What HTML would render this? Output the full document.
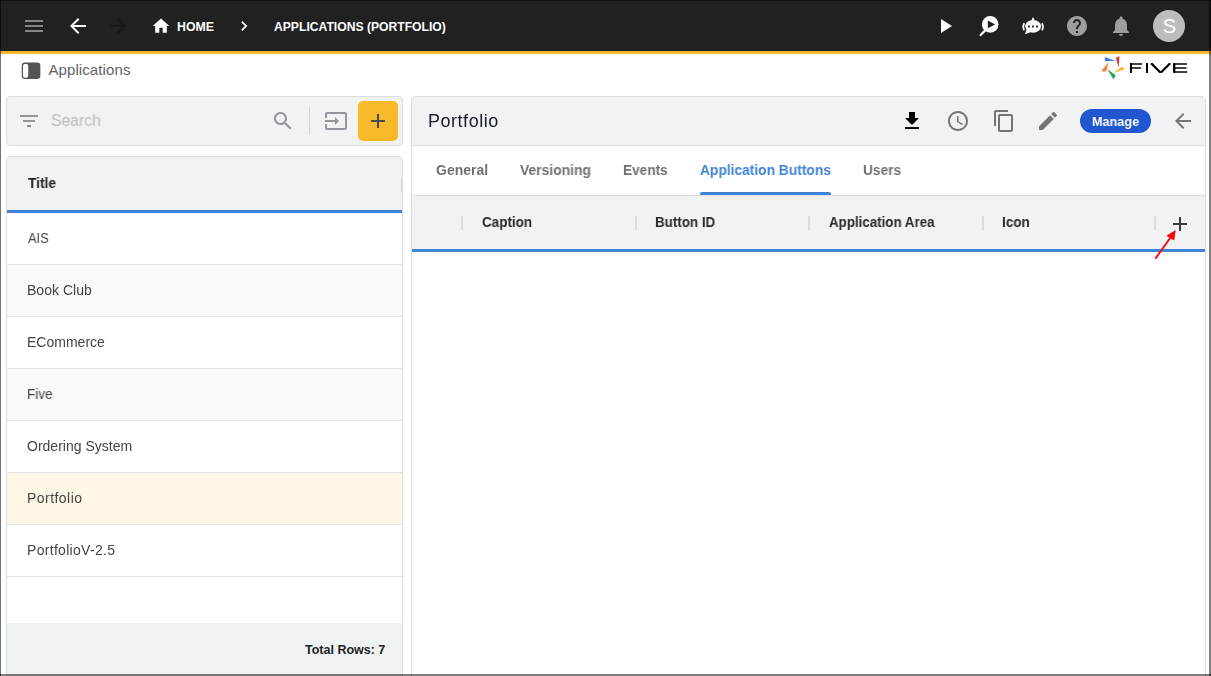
<!DOCTYPE html>
<html lang="en">
<head>
<meta charset="utf-8">
<title>Applications (Portfolio) - Five</title>
<style>

*{box-sizing:border-box;margin:0;padding:0}
ul{list-style:none}
a{text-decoration:none}
html,body{width:1211px;height:676px;overflow:hidden;background:#fff}
body{position:relative;font-family:"Liberation Sans",sans-serif;}
.abs,.ic,.t{position:absolute}
.t{white-space:nowrap;line-height:1;display:block;transform-origin:0 50%}
.g{will-change:transform}
.ic{display:block}
#app{position:absolute;left:0;top:0;width:1211px;height:676px;overflow:hidden;background:#fff}
header{position:absolute;left:0;top:0;width:1211px;height:51px;background:#212121}
#accent{position:absolute;left:0;top:51px;width:1211px;height:3px;background:#f7b52c}
#avatar{position:absolute;left:1153px;top:10px;width:32px;height:32px;border-radius:50%;background:#bdbdbd}
#searchbar{position:absolute;left:6px;top:96px;width:397px;height:50px;background:#f1f2f4;border:1px solid #dcdddf;border-radius:4px}
#addbtn{position:absolute;left:358px;top:101px;width:40px;height:40px;border-radius:5px;background:#f8b92b;border:0}
#vdiv{position:absolute;left:309px;top:107px;width:1px;height:28px;background:#cfd1d4}
#list{position:absolute;left:6px;top:156px;width:397px;height:530px;border:1px solid #dcdddf;border-radius:4px;background:#fff;overflow:hidden}
#list .th{position:absolute;left:0;top:0;width:395px;height:53px;background:#f1f2f4}
#list .bl{position:absolute;left:0;top:53px;width:395px;height:3px;background:#4083d9}
#list .row{position:absolute;left:0;width:395px;height:52px;border-bottom:1px solid #e4e4e5;background:#fff}
#list .row.alt{background:#f8f9fa}
#list .row.sel{background:#fff7e5}
#list .foot{position:absolute;left:0;top:466px;width:395px;height:60px;background:#eff3f3}
#list .hsep{position:absolute;left:394px;top:21px;width:1px;height:14px;background:#d6d7d9}
#main{position:absolute;left:411px;top:96px;width:795px;height:590px;border:1px solid #dcdddf;border-radius:4px;background:#fff;overflow:hidden}
#main .mh{position:absolute;left:0;top:0;width:793px;height:49px;background:#f1f2f4;border-bottom:1px solid #dcdddf}
#main .tabline{position:absolute;left:0;top:98px;width:793px;height:1px;background:#dcdddf}
#main .gh{position:absolute;left:0;top:99px;width:793px;height:53px;background:#f1f2f4}
#main .bl{position:absolute;left:0;top:152px;width:793px;height:3px;background:#4083d9}
#main .ind{position:absolute;left:288px;top:95px;width:131px;height:3px;background:#4083d9;border-radius:2px 2px 0 0}
.csep{position:absolute;top:216px;width:2px;height:14px;background:#dcdcdc}
#manage{position:absolute;left:1080px;top:109px;width:71px;height:24px;border-radius:12px;background:#2056d0}
#t_five{left:1126.3px;top:61.8px;font-family:"DejaVu Sans","Liberation Sans",sans-serif;font-weight:200;font-size:12px;color:#000;letter-spacing:-.9px;transform-origin:0 0;transform:scaleX(2.72);will-change:transform;text-shadow:0 .3px 0 #000,0 .6px 0 #000,0 .9px 0 #000}
#frame-l{position:absolute;left:0;top:0;width:1px;height:676px;background:rgba(0,0,0,.55)}
#frame-t{position:absolute;left:0;top:0;width:1211px;height:1px;background:rgba(0,0,0,.5)}
#frame-r{position:absolute;left:1209px;top:0;width:2px;height:676px;background:rgba(0,0,0,.5)}
#frame-b{position:absolute;left:0;top:674px;width:1211px;height:2px;background:rgba(0,0,0,.5)}

</style>
</head>
<body>
<div id="app">
<header>
<svg class="ic" style="left:22px;top:14px" width="24" height="24" viewBox="0 0 24 24" fill="#858585" ><path d="M3 18h18v-2H3v2zm0-5h18v-2H3v2zm0-7v2h18V6H3z"/></svg>
<svg class="ic" style="left:66px;top:14px" width="24" height="24" viewBox="0 0 24 24" fill="#ffffff" ><path d="M20 11H7.83l5.59-5.59L12 4l-8 8 8 8 1.41-1.41L7.83 13H20v-2z"/></svg>
<svg class="ic" style="left:106px;top:14px" width="24" height="24" viewBox="0 0 24 24" fill="#181818" ><path d="M12 4l-1.41 1.41L16.17 11H4v2h12.17l-5.58 5.59L12 20l8-8z"/></svg>
<nav aria-label="Breadcrumb">
<svg class="ic" style="left:151px;top:16px" width="20" height="20" viewBox="0 0 24 24" fill="#ffffff" ><path d="M10 20v-6h4v6h5v-8h3L12 3 2 12h3v8z"/></svg>
<span id="t_home" class="t" style="left:177.32px;top:20.00px;font-size:13px;font-weight:bold;color:#fff;transform:scaleX(0.9463)">HOME</span>
<svg class="ic" style="left:234px;top:16px" width="20" height="20" viewBox="0 0 24 24" fill="#ffffff" ><path d="M10 6L8.59 7.41 13.17 12l-4.58 4.59L10 18l6-6z"/></svg>
<span id="t_crumb" class="t" style="left:274.17px;top:20.00px;font-size:13px;font-weight:bold;color:#fff;transform:scaleX(0.9342)">APPLICATIONS (PORTFOLIO)</span>
</nav>
<div role="toolbar" aria-label="Actions">
<svg class="ic" style="left:933px;top:14px" width="24" height="24" viewBox="0 0 24 24" fill="#ffffff" ><path d="M8 5v14l11-7z"/></svg>
<svg class="ic" style="left:977px;top:14px" width="24" height="24" viewBox="0 0 24 24"><path d="M3.6 21.0 L9.2 15.4" stroke="#fff" stroke-width="2.3" stroke-linecap="round" fill="none"/><circle cx="13.2" cy="10.4" r="8.3" fill="#fff"/><path d="M10.8 6.5v7.8l7.3-3.9z" fill="#212121"/></svg>
<svg class="ic" style="left:1021px;top:14px" width="24" height="24" viewBox="0 0 24 24" fill="#fff"><path d="M12.1 3.4C13 3.4 13.1 5 13.7 6.8L10.5 6.8C11.1 5 11.2 3.4 12.1 3.4z"/><ellipse cx="12.1" cy="12.3" rx="7.9" ry="6.4"/><path d="M5.6 15.4 L4.0 20.3 L9.8 18.0z"/><path d="M2.9 9.8Q1.5 12.7 2.9 15.6" stroke="#fff" stroke-width="1.8" stroke-linecap="round" fill="none"/><path d="M21.3 9.8Q22.7 12.7 21.3 15.6" stroke="#fff" stroke-width="1.8" stroke-linecap="round" fill="none"/><g fill="#212121"><rect x="7.0" y="11.6" width="1.9" height="1.8" rx=".3"/><rect x="11.0" y="11.6" width="1.9" height="1.8" rx=".3"/><rect x="15.1" y="11.6" width="1.9" height="1.8" rx=".3"/></g></svg>
<svg class="ic" style="left:1065px;top:14px" width="24" height="24" viewBox="0 0 24 24" fill="#9e9e9e" ><path d="M12 2C6.48 2 2 6.48 2 12s4.48 10 10 10 10-4.48 10-10S17.52 2 12 2zm1 17h-2v-2h2v2zm2.07-7.75l-.9.92C13.45 12.9 13 13.5 13 15h-2v-.5c0-1.1.45-2.1 1.17-2.83l1.24-1.26c.37-.36.59-.86.59-1.41 0-1.1-.9-2-2-2s-2 .9-2 2H8c0-2.21 1.79-4 4-4s4 1.79 4 4c0 .88-.36 1.68-.93 2.25z"/></svg>
<svg class="ic" style="left:1109px;top:14px" width="24" height="24" viewBox="0 0 24 24" fill="#9e9e9e" ><path d="M12 22c1.1 0 2-.9 2-2h-4c0 1.1.89 2 2 2zm6-6v-5c0-3.07-1.64-5.64-4.5-6.32V4c0-.83-.67-1.5-1.5-1.5s-1.5.67-1.5 1.5v.68C7.63 5.36 6 7.92 6 11v5l-2 2v1h16v-1l-2-2z"/></svg>
<div id="avatar"></div>
<span id="t_av" class="t" style="left:1162.68px;top:16.07px;font-size:20px;font-weight:normal;color:#fff">S</span>
</div>
</header>
<div id="accent"></div>
<section id="subbar" aria-label="Page title">
<svg class="ic" style="left:21px;top:62px" width="20" height="18" viewBox="0 0 20 18"><rect x="0.75" y="0.6" width="18.6" height="16.4" rx="3.2" fill="#555"/><rect x="2.0" y="1.9" width="5.2" height="13.8" rx="1.8" fill="#fff"/></svg>
<span id="t_apps" class="t" style="left:48.43px;top:62.30px;font-size:15px;font-weight:normal;color:#5f6368;letter-spacing:0.098px">Applications</span>
<svg class="ic" style="left:1098px;top:54px" width="30" height="28" viewBox="0 0 30 28"><path d="M6.8 3.0 L17.6 7.1 L7.0 6.9z" fill="#3b7ddd"/><path d="M21.5 2.1 L17.9 3.9 L20.6 13.4z" fill="#e0343b"/><path d="M23.8 12.8 L26.8 15.3 L15.8 18.7z" fill="#f6b42c"/><path d="M9.1 15.1 L17.9 21.6 L15.4 25.3z" fill="#2fa150"/><path d="M10.6 8.0 L3.1 17.3 L8.2 17.5z" fill="#f5822a"/></svg>
<span id="t_five" class="t">FIVE</span>
</section>
<aside id="sidebar" aria-label="Applications list">
<div id="searchbar"></div>
<svg class="ic" style="left:17px;top:109px" width="24" height="24" viewBox="0 0 24 24" fill="#8f969d" ><path d="M10 18h4v-2h-4v2zM3 6v2h18V6H3zm3 7h12v-2H6v2z"/></svg>
<span id="t_search" class="t g" style="left:51.24px;top:113.46px;font-size:16px;font-weight:normal;color:#b9bbbd;transform:scaleX(0.9837)">Search</span>
<svg class="ic" style="left:271px;top:109px" width="24" height="24" viewBox="0 0 24 24" fill="#8f969d" ><path d="M15.5 14h-.79l-.28-.27C15.41 12.59 16 11.11 16 9.5 16 5.91 13.09 3 9.5 3S3 5.91 3 9.5 5.91 16 9.5 16c1.61 0 3.09-.59 4.23-1.57l.27.28v.79l5 4.99L20.49 19l-4.99-5zm-6 0C7.01 14 5 11.99 5 9.5S7.01 5 9.5 5 14 7.01 14 9.5 11.99 14 9.5 14z"/></svg>
<div id="vdiv"></div>
<svg class="ic" style="left:324px;top:109px" width="24" height="24" viewBox="0 0 24 24" fill="#8f969d" ><path d="M21 3.01H3c-1.1 0-2 .9-2 2V9h2V4.99h18v14.03H3V15H1v4.01c0 1.1.9 1.98 2 1.98h18c1.1 0 2-.88 2-1.98v-14c0-1.11-.9-2-2-2zM11 16l4-4-4-4v3H1v2h10v3z"/></svg>
<div id="addbtn"></div>
<svg class="ic" style="left:366px;top:109px" width="24" height="24" viewBox="0 0 24 24" fill="#474b50" ><path d="M19 13h-6v6h-2v-6H5v-2h6V5h2v6h6v2z"/></svg>
<div id="list"><div class="th"></div><div class="hsep"></div><div class="bl"></div>
<div class="row" style="top:56px"></div>
<div class="row alt" style="top:108px"></div>
<div class="row" style="top:160px"></div>
<div class="row alt" style="top:212px"></div>
<div class="row" style="top:264px"></div>
<div class="row alt sel" style="top:316px"></div>
<div class="row" style="top:368px"></div>
<div class="foot"></div></div>
<span id="t_title" class="t g" style="left:28.42px;top:176.15px;font-size:14px;font-weight:bold;color:#222;transform:scaleX(0.9807)">Title</span>
<ul>
<li id="t_r0" class="t g" style="left:27.75px;top:231.15px;font-size:14px;font-weight:normal;color:#444;transform:scaleX(0.9182)">AIS</li>
<li id="t_r1" class="t g" style="left:26.95px;top:283.15px;font-size:14px;font-weight:normal;color:#444;letter-spacing:0.022px">Book Club</li>
<li id="t_r2" class="t g" style="left:26.95px;top:335.15px;font-size:14px;font-weight:normal;color:#444;letter-spacing:0.013px">ECommerce</li>
<li id="t_r3" class="t g" style="left:26.80px;top:387.15px;font-size:14px;font-weight:normal;color:#444;transform:scaleX(0.9659)">Five</li>
<li id="t_r4" class="t g" style="left:27.24px;top:439.15px;font-size:14px;font-weight:normal;color:#444;letter-spacing:0.010px">Ordering System</li>
<li id="t_r5" class="t g" style="left:26.85px;top:491.15px;font-size:14px;font-weight:normal;color:#444;letter-spacing:0.457px">Portfolio</li>
<li id="t_r6" class="t g" style="left:26.85px;top:543.15px;font-size:14px;font-weight:normal;color:#444;letter-spacing:0.300px">PortfolioV-2.5</li>
</ul>
<span id="t_total" class="t" style="left:305.22px;top:643.00px;font-size:13px;font-weight:bold;color:#222;transform:scaleX(0.9615)">Total Rows: 7</span>
</aside>
<main>
<div id="main"><div class="mh"></div><div class="tabline"></div><div class="ind"></div><div class="gh"></div><div class="bl"></div></div>
<h1 id="t_port" class="t g" style="left:428.40px;top:111.76px;font-size:18px;font-weight:normal;color:#151b29;letter-spacing:0.526px">Portfolio</h1>
<svg class="ic" style="left:900px;top:109px" width="24" height="24" viewBox="0 0 24 24" fill="#000" ><path d="M19 9h-4V3H9v6H5l7 7 7-7zM5 18v2h14v-2H5z"/></svg>
<svg class="ic" style="left:946px;top:109px" width="24" height="24" viewBox="0 0 24 24" fill="#757575" ><path d="M11.99 2C6.47 2 2 6.48 2 12s4.47 10 9.99 10C17.52 22 22 17.52 22 12S17.52 2 11.99 2zM12 20c-4.42 0-8-3.58-8-8s3.58-8 8-8 8 3.58 8 8-3.58 8-8 8zm.5-13H11v6l5.25 3.15.75-1.23-4.5-2.67z"/></svg>
<svg class="ic" style="left:992px;top:109px" width="24" height="24" viewBox="0 0 24 24" fill="#757575" ><path d="M16 1H4c-1.1 0-2 .9-2 2v14h2V3h12V1zm3 4H8c-1.1 0-2 .9-2 2v14c0 1.1.9 2 2 2h11c1.1 0 2-.9 2-2V7c0-1.1-.9-2-2-2zm0 16H8V7h11v14z"/></svg>
<svg class="ic" style="left:1036px;top:109px" width="24" height="24" viewBox="0 0 24 24" fill="#757575" ><path d="M3 17.25V21h3.75L17.81 9.94l-3.75-3.75L3 17.25zM20.71 7.04c.39-.39.39-1.02 0-1.41l-2.34-2.34c-.39-.39-1.02-.39-1.41 0l-1.83 1.83 3.75 3.75 1.83-1.83z"/></svg>
<div id="manage"></div>
<span id="t_manage" class="t g" style="left:1091.90px;top:115.00px;font-size:13px;font-weight:bold;color:#fff;transform:scaleX(0.9734)">Manage</span>
<svg class="ic" style="left:1171px;top:109px" width="24" height="24" viewBox="0 0 24 24" fill="#757575" ><path d="M20 11H7.83l5.59-5.59L12 4l-8 8 8 8 1.41-1.41L7.83 13H20v-2z"/></svg>
<nav role="tablist" aria-label="Sections">
<a id="t_tab0" class="t g" style="left:436.40px;top:163.15px;font-size:14px;font-weight:bold;color:#707070">General</a>
<a id="t_tab1" class="t g" style="left:520.26px;top:163.15px;font-size:14px;font-weight:bold;color:#707070;transform:scaleX(0.9913)">Versioning</a>
<a id="t_tab2" class="t g" style="left:623.30px;top:163.15px;font-size:14px;font-weight:bold;color:#707070;transform:scaleX(0.9740)">Events</a>
<a id="t_tab3" class="t g" style="left:700.24px;top:163.15px;font-size:14px;font-weight:bold;color:#4083d9;transform:scaleX(0.9845)">Application Buttons</a>
<a id="t_tab4" class="t g" style="left:862.93px;top:163.15px;font-size:14px;font-weight:bold;color:#707070;transform:scaleX(0.9781)">Users</a>
</nav>
<div role="row">
<div class="csep" style="left:461px"></div>
<div class="csep" style="left:635px"></div>
<div class="csep" style="left:808px"></div>
<div class="csep" style="left:982px"></div>
<div class="csep" style="left:1154px"></div>
<span id="t_col0" class="t g" style="left:482.21px;top:215.15px;font-size:14px;font-weight:bold;color:#2a2a2a;transform:scaleX(0.9616)">Caption</span>
<span id="t_col1" class="t g" style="left:655.32px;top:215.15px;font-size:14px;font-weight:bold;color:#2a2a2a;transform:scaleX(0.9570)">Button ID</span>
<span id="t_col2" class="t g" style="left:829.00px;top:215.15px;font-size:14px;font-weight:bold;color:#2a2a2a;transform:scaleX(0.9526)">Application Area</span>
<span id="t_col3" class="t g" style="left:1002.12px;top:215.15px;font-size:14px;font-weight:bold;color:#2a2a2a;transform:scaleX(0.9642)">Icon</span>
<svg class="ic" style="left:1168px;top:212px" width="24" height="24" viewBox="0 0 24 24" fill="#3a3a3a" ><path d="M19 13h-6v6h-2v-6H5v-2h6V5h2v6h6v2z"/></svg>
</div>
<svg class="ic" style="left:1146px;top:222px" width="40" height="44" viewBox="0 0 40 44"><path d="M9.3 36.8 L24.5 15.5" stroke="#f00" stroke-width="1.8" fill="none"/><path d="M29.7 8 L20.4 13.7 L28.2 18.4z" fill="#f00"/></svg>
</main>
<div id="frame-t"></div><div id="frame-l"></div><div id="frame-r"></div><div id="frame-b"></div>
</div>
</body>
</html>
